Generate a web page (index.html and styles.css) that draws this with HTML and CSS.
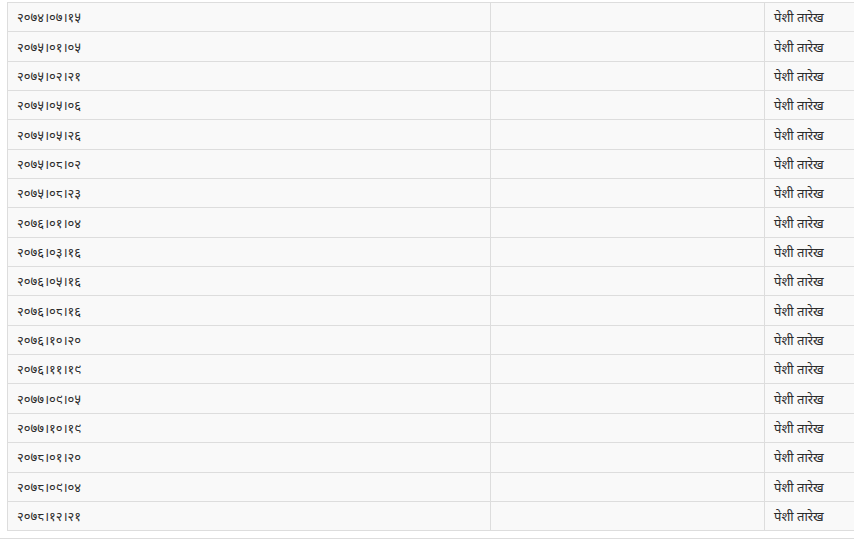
FILE: index.html
```html
<!DOCTYPE html>
<html lang="ne">
<head>
<meta charset="utf-8">
<link rel="stylesheet" href="styles.css">
</head>
<body>
<div class="wrap">
<table class="dates">
<tbody>
<tr><td class="c1">२०७४।०७।१५</td><td class="c2"></td><td class="c3">पेशी तारेख</td></tr>
<tr><td class="c1">२०७५।०१।०५</td><td class="c2"></td><td class="c3">पेशी तारेख</td></tr>
<tr><td class="c1">२०७५।०२।२१</td><td class="c2"></td><td class="c3">पेशी तारेख</td></tr>
<tr><td class="c1">२०७५।०५।०६</td><td class="c2"></td><td class="c3">पेशी तारेख</td></tr>
<tr><td class="c1">२०७५।०५।२६</td><td class="c2"></td><td class="c3">पेशी तारेख</td></tr>
<tr><td class="c1">२०७५।०८।०२</td><td class="c2"></td><td class="c3">पेशी तारेख</td></tr>
<tr><td class="c1">२०७५।०८।२३</td><td class="c2"></td><td class="c3">पेशी तारेख</td></tr>
<tr><td class="c1">२०७६।०१।०४</td><td class="c2"></td><td class="c3">पेशी तारेख</td></tr>
<tr><td class="c1">२०७६।०३।१६</td><td class="c2"></td><td class="c3">पेशी तारेख</td></tr>
<tr><td class="c1">२०७६।०५।१६</td><td class="c2"></td><td class="c3">पेशी तारेख</td></tr>
<tr><td class="c1">२०७६।०८।१६</td><td class="c2"></td><td class="c3">पेशी तारेख</td></tr>
<tr><td class="c1">२०७६।१०।२०</td><td class="c2"></td><td class="c3">पेशी तारेख</td></tr>
<tr><td class="c1">२०७६।११।१९</td><td class="c2"></td><td class="c3">पेशी तारेख</td></tr>
<tr><td class="c1">२०७७।०९।०५</td><td class="c2"></td><td class="c3">पेशी तारेख</td></tr>
<tr><td class="c1">२०७७।१०।१९</td><td class="c2"></td><td class="c3">पेशी तारेख</td></tr>
<tr><td class="c1">२०७८।०१।२०</td><td class="c2"></td><td class="c3">पेशी तारेख</td></tr>
<tr><td class="c1">२०७८।०९।०४</td><td class="c2"></td><td class="c3">पेशी तारेख</td></tr>
<tr><td class="c1">२०७८।१२।२१</td><td class="c2"></td><td class="c3">पेशी तारेख</td></tr>
</tbody>
</table>
</div>
<div class="rule"></div>
</body>
</html>
```

FILE: styles.css
```css
html, body {
  margin: 0;
  padding: 0;
  background: #ffffff;
  overflow: hidden;
}
body {
  font-family: "Noto Sans", "Noto Sans Devanagari", "Lohit Devanagari", sans-serif;
  font-size: 13px;
  color: #2b2b2b;
}
.wrap {
  padding: 2px 0 0 7px;
}
.dates {
  border-collapse: collapse;
  width: 857px;
  table-layout: fixed;
  background: #f9f9f9;
}
.dates td {
  border: 1px solid #dddddd;
  height: 29.35px;
  padding: 0 9px;
  box-sizing: border-box;
  vertical-align: middle;
  white-space: nowrap;
}
.dates .c3 {
  border-right: none;
}
.c1 { width: 483px; }
.c2 { width: 274px; }
.rule {
  margin-top: 7px;
  height: 0;
  border-top: 1px solid #dddddd;
}
```
